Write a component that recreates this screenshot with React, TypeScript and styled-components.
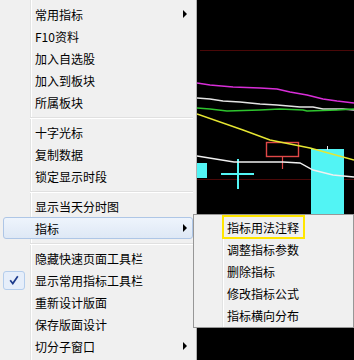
import React from 'react';
import styled, { createGlobalStyle, css } from 'styled-components';

const GlobalStyle = createGlobalStyle`
  html, body {
    margin: 0;
    padding: 0;
    background: #000;
  }
  body {
    font-family: "Noto Sans CJK SC", "Liberation Sans", sans-serif;
    font-size: 12px;
    color: #000;
  }
`;

type Entry =
  | { label: string; sub?: boolean; checked?: boolean; active?: boolean }
  | 'sep';

const mainEntries: Entry[] = [
  { label: '常用指标', sub: true },
  { label: 'F10资料' },
  { label: '加入自选股' },
  { label: '加入到板块' },
  { label: '所属板块' },
  'sep',
  { label: '十字光标' },
  { label: '复制数据' },
  { label: '锁定显示时段' },
  'sep',
  { label: '显示当天分时图' },
  { label: '指标', sub: true, active: true },
  'sep',
  { label: '隐藏快速页面工具栏' },
  { label: '显示常用指标工具栏', checked: true },
  { label: '重新设计版面' },
  { label: '保存版面设计' },
  { label: '切分子窗口', sub: true },
];

const subEntries = ['指标用法注释', '调整指标参数', '删除指标', '修改指标公式', '指标横向分布'];

const App: React.FC = () => {
  return (
    <>
      <GlobalStyle />
      <Screen>
        <Menu>
          {mainEntries.map((e, i) =>
            e === 'sep' ? (
              <Separator key={i} />
            ) : (
              <Item key={i} $active={e.active}>
                <Gutter>
                  {e.checked && (
                    <Check>
                      <svg width="10" height="10" viewBox="0 0 10 10">
                        <path d="M1.2 5.2 L3.8 8.6 L8.8 1.2" fill="none" stroke="#1d3b8c" strokeWidth="1.7" />
                      </svg>
                    </Check>
                  )}
                </Gutter>
                <Label>{e.label}</Label>
                {e.sub && <Arrow />}
              </Item>
            )
          )}
        </Menu>
        <Chart>
          <svg width="157" height="360" viewBox="197 0 157 360">
            <line x1="200" y1="50.5" x2="354" y2="50.5" stroke="#4a0808" strokeWidth="1" />
            <line x1="197" y1="179.5" x2="354" y2="179.5" stroke="#4a0808" strokeWidth="1" />
            <rect x="311" y="149" width="33" height="75" fill="#52f4f4" />
            <line x1="327.5" y1="146" x2="327.5" y2="150" stroke="#e8e8e8" strokeWidth="1" />
            <rect x="197" y="163" width="10" height="15" fill="#52f4f4" />
            <rect x="221" y="173" width="33" height="2" fill="#52f4f4" />
            <rect x="237" y="159" width="2" height="30" fill="#52f4f4" />
            <rect x="266.5" y="142.5" width="32" height="14" fill="none" stroke="#e04848" strokeWidth="1.4" />
            <line x1="282.5" y1="157" x2="282.5" y2="169" stroke="#e04848" strokeWidth="1.2" />
            <polyline
              points="197,83 210,85 233,87 260,88 277,89 290,92 307,95 323,99 337,101 354,103"
              fill="none"
              stroke="#d82ed8"
              strokeWidth="1.6"
            />
            <polyline
              points="197,98 210,99 223,101 240,102 260,104 277,105 300,107 313,107 323,109 343,109 354,110"
              fill="none"
              stroke="#e4e4e4"
              strokeWidth="1.3"
            />
            <polyline
              points="197,108 210,109 227,111 260,110 280,109 303,110 307,111 337,110 354,109"
              fill="none"
              stroke="#2ec42e"
              strokeWidth="1.5"
            />
            <polyline
              points="197,114 243,130 270,140 310,148 354,160"
              fill="none"
              stroke="#e6e632"
              strokeWidth="1.4"
            />
            <polyline
              points="197,156 234,162 283,162 300,163 313,170 333,175 354,177"
              fill="none"
              stroke="#f0f0f0"
              strokeWidth="1.4"
            />
          </svg>
        </Chart>
        <SubMenu>
          {subEntries.map((label, i) => (
            <SubItem key={label}>
              <Gutter />
              <Label $marked={i === 0}>{label}</Label>
            </SubItem>
          ))}
        </SubMenu>
      </Screen>
    </>
  );
};

export default App;

const Screen = styled.div`
  position: relative;
  display: flex;
  width: 354px;
  height: 360px;
  overflow: hidden;
  background: #000;
`;

const Menu = styled.div`
  width: 197px;
  flex-shrink: 0;
  box-sizing: border-box;
  padding: 3px 0;
  border-right: 1px solid #b2b2b2;
  background: linear-gradient(
    to right,
    #f0f0f0 0 30px,
    #e2e3e3 30px 31px,
    #ffffff 31px 32px,
    #f0f0f0 32px
  );
`;

const Item = styled.div<{ $active?: boolean }>`
  display: flex;
  align-items: center;
  height: 22px;
  box-sizing: border-box;
  margin: 0 3px;
  border: 1px solid transparent;
  border-radius: 3px;
  ${(p) =>
    p.$active &&
    css`
      border-color: #aec6e6;
      background: linear-gradient(#eef4fc, #dee8f5);
    `}
`;

const SubItem = styled(Item)`
  margin: 0 1px;
`;

const Gutter = styled.div`
  width: 31px;
  height: 100%;
  flex-shrink: 0;
  display: flex;
  align-items: center;
`;

const Check = styled.div`
  margin-left: -1px;
  width: 22px;
  height: 19px;
  box-sizing: border-box;
  border: 1px solid #b4cdec;
  border-radius: 3px;
  background: #e6eefa;
  display: flex;
  align-items: center;
  justify-content: center;
`;

const Label = styled.span<{ $marked?: boolean }>`
  flex: 1;
  white-space: nowrap;
  line-height: 17px;
  ${(p) =>
    p.$marked &&
    css`
      flex: none;
      height: 24px;
      box-sizing: border-box;
      display: flex;
      align-items: center;
      margin-left: -5px;
      padding: 0 4px 0 3px;
      border: 2px solid #ffe600;
    `}
`;

const Arrow = styled.span`
  width: 0;
  height: 0;
  margin-right: 5px;
  border-left: 4px solid #000;
  border-top: 4px solid transparent;
  border-bottom: 4px solid transparent;
`;

const Separator = styled.div`
  margin: 4px 3px 2px 30px;
  border-top: 1px solid #e0e0e0;
  border-bottom: 1px solid #ffffff;
`;

const Chart = styled.div`
  flex: 1;
  display: flex;
  background: #000;
`;

const SubMenu = styled.div`
  position: absolute;
  left: 193px;
  top: 214px;
  width: 161px;
  box-sizing: border-box;
  padding: 1px 0;
  border: 1px solid #979797;
  background: linear-gradient(
    to right,
    #f0f0f0 0 28px,
    #e2e3e3 28px 29px,
    #ffffff 29px 30px,
    #f0f0f0 30px
  );
`;
